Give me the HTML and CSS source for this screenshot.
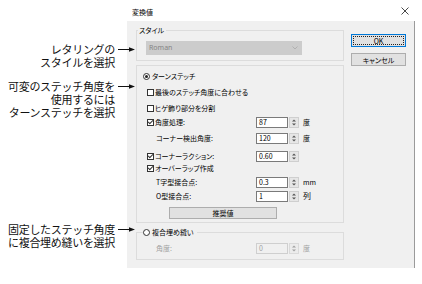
FILE: index.html
```html
<!DOCTYPE html>
<html lang="ja">
<head>
  <meta charset="UTF-8">
  <meta name="viewport" content="width=device-width, initial-scale=1.0">
  <title>変換値</title>
  <link rel="stylesheet" href="styles.css">
</head>
<body>

<div class="screen">
  <div class="notes">
    <div class="note note-style">
      <div class="note-text">レタリングの<br>スタイルを選択</div>
      <svg class="arrow" viewBox="0 0 20 13"><path d="M3 6.5H15" stroke="#111" stroke-width="1"/><path d="M14 4.3L20 6.5L14 8.7Z" fill="#111"/></svg>
    </div>
    <div class="note note-turn">
      <div class="note-text">可変のステッチ角度を<br>使用するには<br>ターンステッチを選択</div>
      <svg class="arrow" viewBox="0 0 20 13"><path d="M3 6.5H15" stroke="#111" stroke-width="1"/><path d="M14 4.3L20 6.5L14 8.7Z" fill="#111"/></svg>
    </div>
    <div class="note note-fill">
      <div class="note-text">固定したステッチ角度<br>に複合埋め縫いを選択</div>
      <svg class="arrow" viewBox="0 0 20 13"><path d="M3 6.5H15" stroke="#111" stroke-width="1"/><path d="M14 4.3L20 6.5L14 8.7Z" fill="#111"/></svg>
    </div>
  </div>

  <div class="dialog">
    <div class="titlebar">
      <span class="title">変換値</span>
      <svg class="close" viewBox="0 0 8 8"><path d="M0.5 0.5L7.5 7.5M7.5 0.5L0.5 7.5" stroke="#333" stroke-width="0.9"/></svg>
    </div>

    <div class="body">
      <div class="main">
        <fieldset class="group group-style">
          <legend>スタイル</legend>
          <div class="combo">
            <span>Roman</span>
            <svg class="chevron" viewBox="0 0 6 4"><path d="M0.5 0.5L3 3L5.5 0.5" fill="none" stroke="#a8a8a8" stroke-width="0.8"/></svg>
          </div>
        </fieldset>

        <div class="group group-turn">
          <div class="row">
            <span class="lead lead-radio"><span class="radio on"></span>ターンステッチ</span>
          </div>
          <div class="row">
            <span class="lead lead-check"><span class="check"></span>最後のステッチ角度に合わせる</span>
          </div>
          <div class="row">
            <span class="lead lead-check"><span class="check"></span>ヒゲ飾り部分を分割</span>
          </div>
          <div class="row tight">
            <span class="lead lead-check"><span class="check on"></span>角度処理:</span>
            <span class="field">87</span>
            <svg class="spin" viewBox="0 0 10 11"><rect x="0.5" y="0.5" width="9" height="10" fill="#e6e6e6" stroke="#cfcfcf"/><path d="M3 4.6H7L5 2.6Z M3 6.4H7L5 8.4Z" fill="#555"/></svg>
            <span class="unit">度</span>
          </div>
          <div class="row">
            <span class="lead lead-plain">コーナー検出角度:</span>
            <span class="field">120</span>
            <svg class="spin" viewBox="0 0 10 11"><rect x="0.5" y="0.5" width="9" height="10" fill="#e6e6e6" stroke="#cfcfcf"/><path d="M3 4.6H7L5 2.6Z M3 6.4H7L5 8.4Z" fill="#555"/></svg>
            <span class="unit">度</span>
          </div>
          <div class="row loose">
            <span class="lead lead-check"><span class="check on"></span>コーナーラクション:</span>
            <span class="field">0.60</span>
            <svg class="spin" viewBox="0 0 10 11"><rect x="0.5" y="0.5" width="9" height="10" fill="#e6e6e6" stroke="#cfcfcf"/><path d="M3 4.6H7L5 2.6Z M3 6.4H7L5 8.4Z" fill="#555"/></svg>
          </div>
          <div class="row flush">
            <span class="lead lead-check"><span class="check on"></span>オーバーラップ作成</span>
          </div>
          <div class="row tight">
            <span class="lead lead-plain">T字型接合点:</span>
            <span class="field">0.3</span>
            <svg class="spin" viewBox="0 0 10 11"><rect x="0.5" y="0.5" width="9" height="10" fill="#e6e6e6" stroke="#cfcfcf"/><path d="M3 4.6H7L5 2.6Z M3 6.4H7L5 8.4Z" fill="#555"/></svg>
            <span class="unit">mm</span>
          </div>
          <div class="row tight">
            <span class="lead lead-plain">O型接合点:</span>
            <span class="field">1</span>
            <svg class="spin" viewBox="0 0 10 11"><rect x="0.5" y="0.5" width="9" height="10" fill="#e6e6e6" stroke="#cfcfcf"/><path d="M3 4.6H7L5 2.6Z M3 6.4H7L5 8.4Z" fill="#555"/></svg>
            <span class="unit unit-big">列</span>
          </div>
          <div class="btn-recommend">推奨値</div>
        </div>

        <fieldset class="group group-fill">
          <legend><span class="radio"></span>複合埋め縫い</legend>
          <div class="row first">
            <span class="lead lead-plain off">角度:</span>
            <span class="field off">0</span>
            <svg class="spin" viewBox="0 0 10 11"><rect x="0.5" y="0.5" width="9" height="10" fill="#ececec" stroke="#dadada"/><path d="M3 4.6H7L5 2.6Z M3 6.4H7L5 8.4Z" fill="#a0a0a0"/></svg>
            <span class="unit off">度</span>
          </div>
        </fieldset>
      </div>

      <div class="buttons">
        <div class="btn btn-default"><span>OK</span></div>
        <div class="btn">キャンセル</div>
      </div>
    </div>
  </div>
</div>

</body>
</html>
```

FILE: styles.css
```css
* {
  box-sizing: border-box;
}

body {
  margin: 0;
  background: #fff;
  font-family: "Noto Sans CJK JP", "Noto Sans", sans-serif;
  color: #111;
}

.screen {
  display: flex;
  width: 422px;
  height: 284px;
}

/* callouts on the left */
.notes {
  width: 127px;
  flex: none;
  font-size: 11px;
  line-height: 13px;
}

.note {
  display: flex;
  align-items: flex-start;
}

.note-text {
  width: 115px;
  text-align: right;
  white-space: nowrap;
  letter-spacing: -0.3px;
}

.arrow {
  flex: none;
  width: 20px;
  height: 13px;
  margin-right: -8px;
  position: relative;
  z-index: 1;
}

.note-style {
  margin-top: 43px;
}

.note-turn {
  margin-top: 11px;
}

.note-fill {
  margin-top: 104px;
}

/* dialog */
.dialog {
  width: 288px;
  flex: none;
  font-size: 7px;
  line-height: 8px;
  font-feature-settings: "palt";
  color: #000;
}

.titlebar {
  height: 21px;
  display: flex;
  align-items: center;
  justify-content: space-between;
  padding: 2px 6px 0 5px;
}

.close {
  width: 8px;
  height: 8px;
  margin-top: -2px;
}

.body {
  display: flex;
  height: 247px;
  background: #f0f0f0;
  border-right: 1px solid #9a9a9a;
  padding: 5px 8px 8px 9px;
}

.main {
  width: 208px;
  flex: none;
}

.group {
  margin: 0;
  min-width: 0;
  padding: 0;
  border: 1px solid #dcdcdc;
}

.group legend {
  padding: 0;
  line-height: 8px;
}

.group-style {
  padding: 7px 0 5px;
}

.group-style legend {
  margin-left: 1px;
  padding: 0 2px 0 1px;
}

.combo {
  margin-left: 9px;
  width: 156px;
  height: 14px;
  display: flex;
  align-items: center;
  justify-content: space-between;
  padding: 0 4px 0 3px;
  background: #cccccc;
  color: #858585;
  font-family: "Noto Sans", sans-serif;
}

.chevron {
  width: 6px;
  height: 4px;
}

.group-turn {
  margin-top: 4px;
  padding: 4px 0 3px;
}

.group-fill {
  margin-top: 5px;
  padding: 6px 0 5px;
}

.group-fill legend {
  margin-left: 6px;
  padding-right: 3px;
}

.row {
  display: flex;
  align-items: center;
  height: 12px;
  margin-top: 4px;
  white-space: nowrap;
}

.row:first-child,
.row.first {
  margin-top: 0;
}

.row.tight {
  margin-top: 2px;
}

.row.loose {
  margin-top: 6px;
}

.row.flush {
  margin-top: 0;
}

.lead {
  flex: 0 0 119px;
  display: flex;
  align-items: center;
}

.lead-radio {
  padding-left: 6px;
}

.lead-check {
  padding-left: 10px;
}

.lead-plain {
  padding-left: 19px;
}

.check {
  display: inline-flex;
  align-items: center;
  justify-content: center;
  width: 7px;
  height: 7px;
  margin-right: 1px;
  border: 1px solid #333;
  background: #fff;
}

.check.on::after {
  content: "";
  width: 2px;
  height: 4px;
  margin-top: -1px;
  border: solid #333;
  border-width: 0 1px 1px 0;
  transform: rotate(45deg);
}

.radio {
  display: inline-flex;
  align-items: center;
  justify-content: center;
  width: 7px;
  height: 7px;
  margin-right: 2px;
  border: 1px solid #333;
  border-radius: 50%;
  background: #fff;
  vertical-align: -1px;
}

.radio.on::after {
  content: "";
  width: 3px;
  height: 3px;
  border-radius: 50%;
  background: #222;
}

.field {
  width: 32px;
  height: 11px;
  display: flex;
  align-items: center;
  padding-left: 2px;
  border: 1px solid #7a7a7a;
  background: #fff;
}

.spin {
  width: 10px;
  height: 11px;
  margin-left: 1px;
  flex: none;
}

.unit {
  margin-left: 4px;
}

.unit-big {
  font-size: 8px;
}

.off {
  color: #a0a0a0;
}

.field.off {
  border-color: #cfcfcf;
  background: #f0f0f0;
}

.btn-recommend {
  margin: 5px 0 0 32px;
  width: 108px;
  height: 12px;
  border: 1px solid #adadad;
  background: #e1e1e1;
  text-align: center;
  line-height: 10px;
}

/* OK / cancel */
.buttons {
  width: 55px;
  margin-left: 7px;
  padding-top: 8px;
}

.btn {
  height: 13px;
  display: flex;
  align-items: center;
  justify-content: center;
  border: 1px solid #adadad;
  background: #e1e1e1;
}

.btn + .btn {
  margin-top: 6px;
}

.btn-default {
  border-color: #0078d7;
  padding: 1px;
}

.btn-default span {
  flex: 1;
  align-self: stretch;
  display: flex;
  align-items: center;
  justify-content: center;
  border: 1px dotted #222;
}
```
